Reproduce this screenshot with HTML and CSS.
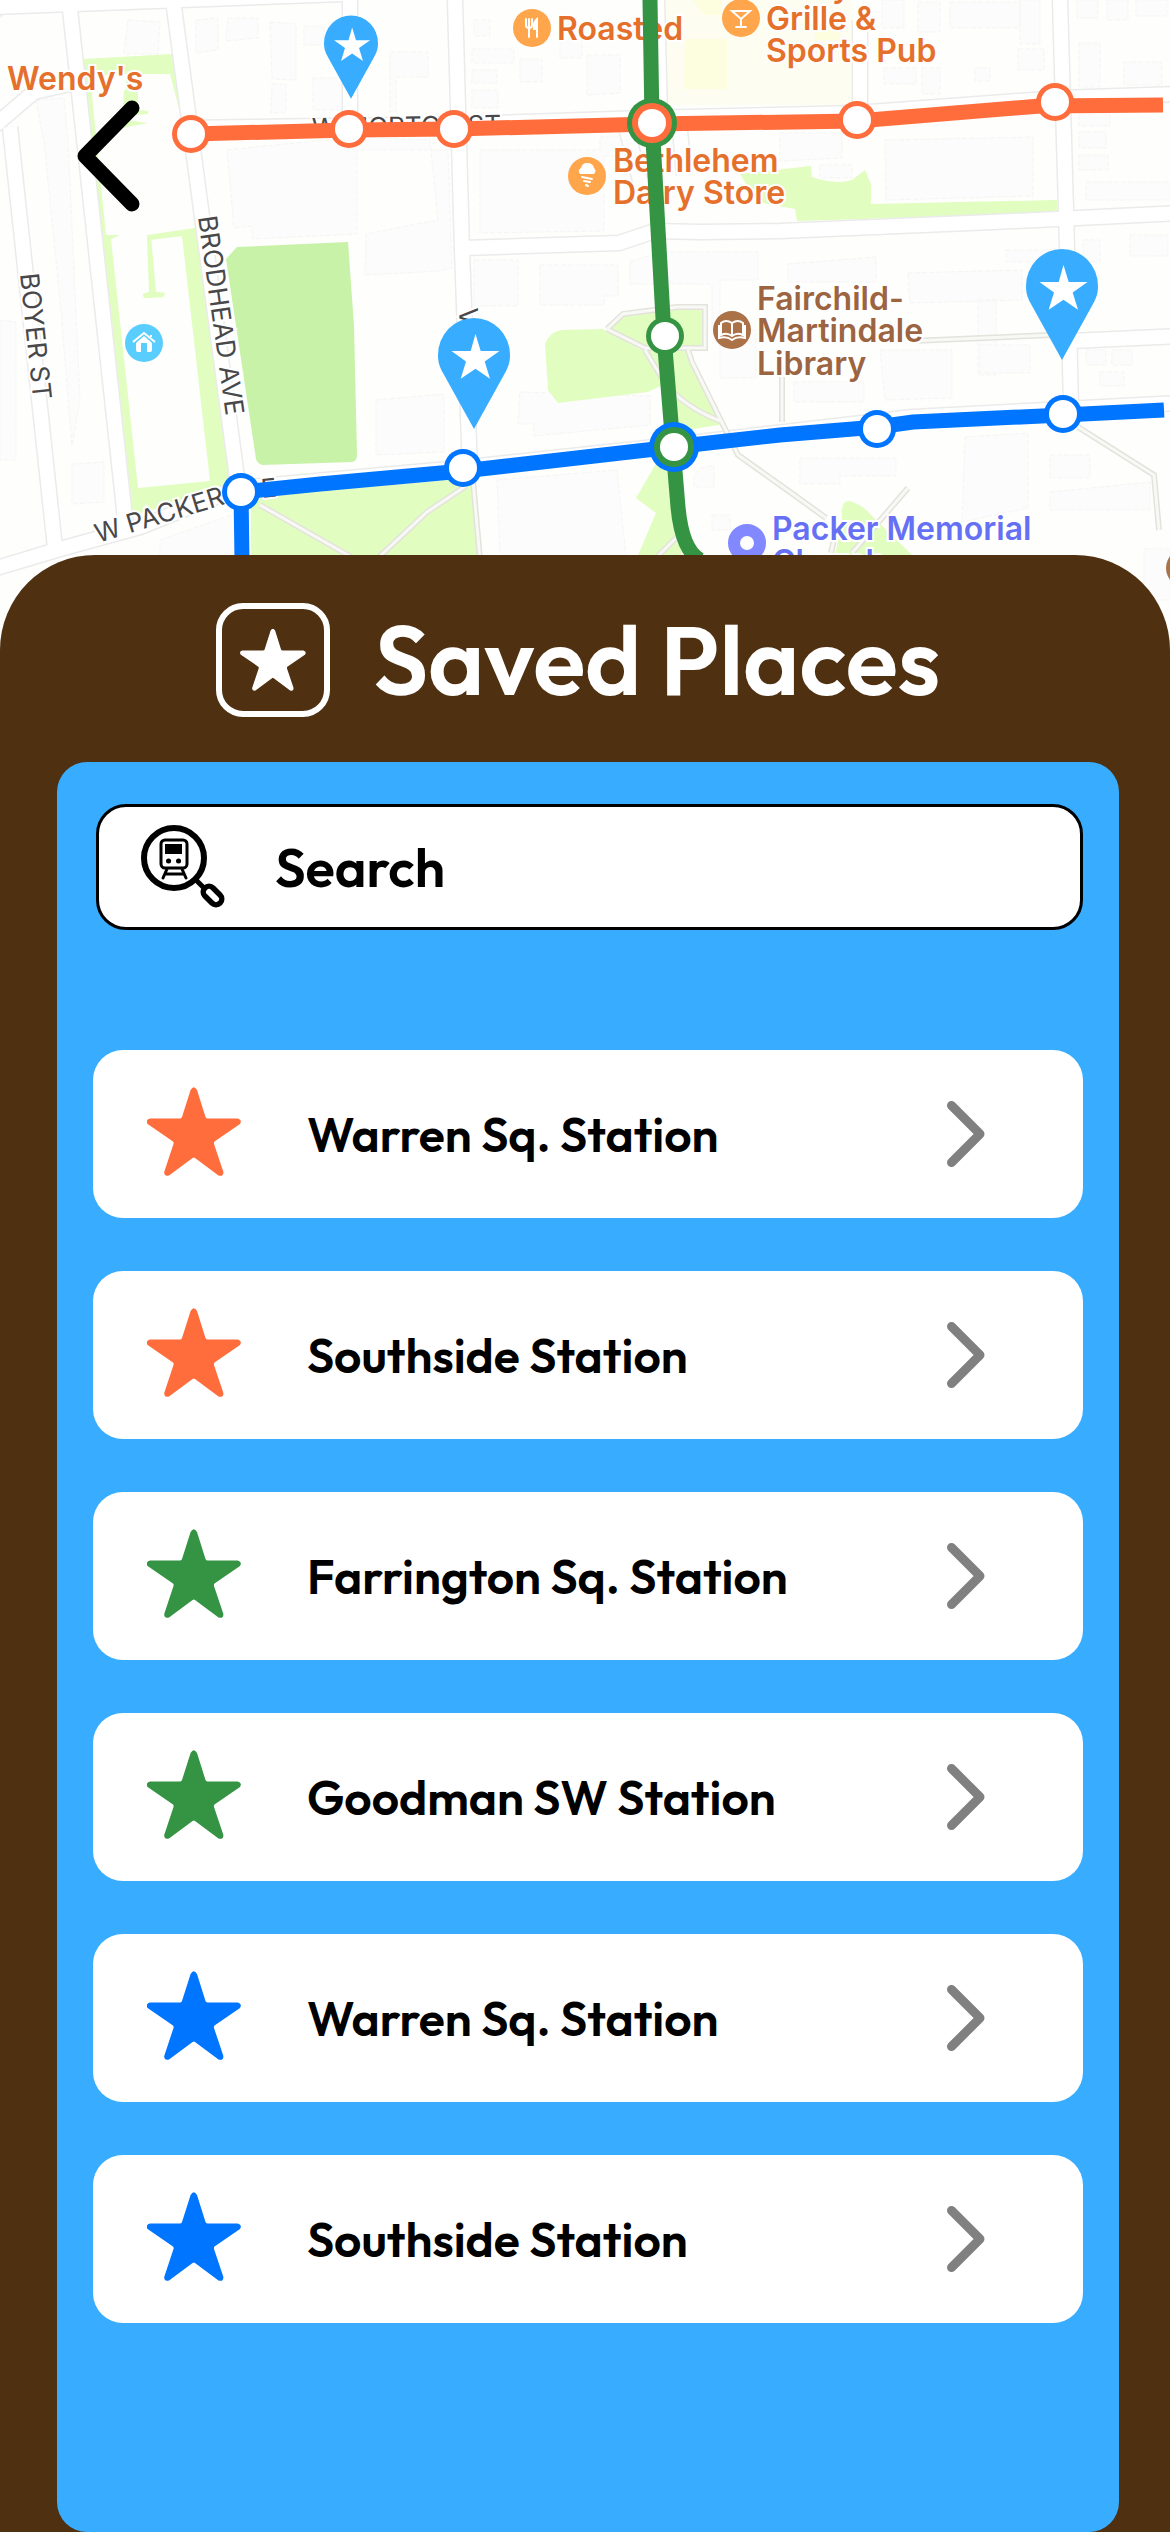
FILE: index.html
```html
<!DOCTYPE html>
<html lang="en">
<head>
<meta charset="utf-8">
<meta name="viewport" content="width=device-width, initial-scale=1">
<title>Saved Places</title>
<link rel="stylesheet" href="styles.css">
</head>
<body>
<svg class="defs" width="0" height="0" aria-hidden="true">
  <symbol id="star" viewBox="0 0 94 90">
    <path d="M43.600 3Q46.800-2.500 50 3L58.500 30Q59 31.500 61 31.500H90.500Q95.500 33 93 37L67.500 54.500Q66.700 55.500 67 57L76.400 85Q76.500 90 71.500 88.500L48 71Q46.800 70 45.600 71L22 88.500Q17 90 17.200 85L26.500 57Q27 55.500 26 54.500L.600 37Q-2 33 3 31.500H32.600Q34.600 31.500 35 30Z"/>
  </symbol>
  <symbol id="chevron" viewBox="0 0 38 66">
    <path d="M4.500 4.500L33 33L4.500 61.500" fill="none" stroke="currentColor" stroke-width="9" stroke-linecap="round" stroke-linejoin="round"/>
  </symbol>
  <symbol id="pin" viewBox="0 0 72 111">
    <path d="M36 111L5 55C1 48 0 43 0 37A36 37 0 0 1 72 37C72 43 71 48 67 55Z" fill="#38adff"/>
    <path d="M37.500 16L42.700 33H61.500L46.700 43.600L52 60.700L37.500 50.700L22.700 60.700L28 43.600L13.500 33H32.700Z" fill="#fff"/>
  </symbol>
</svg>

<header class="map">
  <svg class="map-art" viewBox="0 0 1170 650" role="img" aria-label="Transit map">
    <rect width="1170" height="650" fill="#fefefc"/>
    <path d="M0 0H22L0 18Z" fill="#f1f1f6"/>
    <!-- buildings -->
    <g fill="#fcfcfd" stroke="#f5f5f3" stroke-dasharray="5 2">
      <path d="M128 20L160 22L158 54L124 54ZM196 20L218 18V50L196 53ZM228 18H258V38L226 41ZM270 22L296 24V80L272 79ZM304 26H324V45H304ZM313 78H346V110H313ZM272 84H286V112L271 113Z"/>
      <path d="M36 100L64 98L68 140L80 400L72 446L60 300L44 142Z"/>
      <path d="M141 145L170 142V163L140 165ZM130 172L172 170L176 201L130 207ZM152 212L184 210V228L152 230Z"/>
      <path d="M227 150L354 137L430 140L438 220L366 234L365 275L440 271L452 268L448 150L357 150V234L252 239V226L234 228Z"/>
      <path d="M72 464L104 462V502L72 504ZM0 320L16 322V460H0ZM376 400L444 394V452L376 455ZM160 540L240 512V556H160Z"/>
      <path d="M474 20H490V36H474ZM472 49H514V63H472ZM472 70H497V83H472ZM520 59H542V82H520ZM587 55H620V93L587 95ZM560 24H582V58H560ZM472 90H498V108H472ZM390 52H428V77H396V112H390Z"/>
      <path d="M480 150H600V137H630V156H604V231L480 233ZM470 240"/>
      <path d="M474 260H518V306H474ZM540 265H618V296H604V305H540ZM630 262L660 252H758V280H720V378H756V330H712V284H630Z"/>
      <path d="M520 392L650 396V425L534 436V424H518Z"/>
      <path d="M497 480L617 470L626 556H500ZM700 468L714 465V487H694V476ZM712 515H730V530H712Z"/>
      <path d="M885 140L1033 137V196L886 200ZM780 133H842V158L780 161ZM820 165H852V178H820Z"/>
      <path d="M788 264L876 257V282H788ZM908 273L1022 270V300L910 303ZM978 300H996V375H978ZM1006 250H1054V262H1006Z"/>
      <path d="M880 350H952V398L885 400ZM980 345H1030V373H980ZM794 382H864V402H794Z"/>
      <path d="M800 458H896V476H840V484H800ZM965 437L1028 433V508L962 522ZM1050 455H1090V478H1050ZM1050 492L1150 482V510H1050Z"/>
      <path d="M882 0V28H904V0ZM918 2H940V32H918ZM950 2H1020V28H950ZM1020 0V44H1040V0ZM884 68H916V84H884ZM922 68H940V94H922ZM975 68H990V81H975ZM1018 49H1044V70H1018Z"/>
      <path d="M1077 0V18H1098V0ZM1107 0V20H1128V0ZM1136 0V16H1168V0ZM1079 43H1100V87H1079ZM1124 62H1162V85H1124ZM1079 110H1110V126H1079ZM1079 132H1106V148H1079ZM1079 155H1108V170H1079ZM1086 182H1170V200H1086ZM1083 240H1100V262H1083ZM1130 235H1168V256H1130ZM1086 350H1106V365H1086ZM1112 350H1132V365H1112ZM1100 372H1124V386H1100ZM1144 549H1170V600H1144Z"/>
    </g>
    <!-- parks and lawns -->
    <path d="M663 0H852V105H667Z" fill="#fefdf1"/>
    <path d="M685 39H727V89H684ZM692 0L704 15H722V0ZM815 30H840V40H815Z" fill="#fdfde0"/>
    <g fill="#e1fdc0">
      <path d="M83 59L173 54L182 113L230 477L225 490L133 515Z"/>
      <path d="M251 497L472 478L482 560H251Z"/>
      <path d="M545 344Q550 331 563 330L603 329L645 352L663 385L648 392L558 403L548 390Z"/>
      <path d="M607 329L623 314L677 307H704V348L688 350L692 366L725 424L680 431L663 385L645 350Z"/>
      <path d="M657 462L636 498L656 513L636 560H682L673 462Z"/>
      <path d="M842 518Q840 500 850 501Q864 506 870 514L913 556H835Z"/>
      <path d="M740 174L811 166L812 177Q835 185 852 180L865 170L871 184V204L1057 200V213L797 221L795 209L757 202Z"/>
    </g>
    <path d="M90 76L126 74V120L148 123L122 128L124 90H138V74L170 74L182 120L195 228L147 235L154 292L165 293L163 297L144 298L143 294L149 292L150 240L182 236L210 481L138 488L111 239L120 235L147 235L106 235Z" fill="#fefefc" fill-rule="evenodd"/>
    <path d="M127 78H138V110L148 111V114L124 116Z" fill="#e1fdc0"/>
    <path d="M147 237L151 236L156 292L165 293L163 297L144 298L143 294L149 292Z" fill="#e1fdc0"/>
    <path d="M226 259L237 247L348 242L354 326L357 455Q357 461 352 462L262 465Q257 463 256 459Z" fill="#c7f2a8"/>
    <!-- streets: casing, then surface -->
    <g fill="none" stroke="#ebebeb" stroke-width="17" stroke-linejoin="round">
      <path d="M-8 128L34 92L70 84M10 127L55 548M69 0L126 528M173 0L238 485M350 0V120"/>
      <path d="M-10 7L343 -6M455 0L462 250L470 470M464 248L619 243L655 231L700 232L780 231L993 222L1180 213"/>
      <path d="M185 128L465 124L645 118L856 113L1060 98L1180 94M657 0L660 115M860 20V110M1060 0L1066 210L1071 405M1071 341L1180 336"/>
      <path d="M-10 570L60 549L140 527L238 488L460 468L673 445L913 417L1180 403M624 120L640 180M680 130L684 175"/>
    </g>
    <g fill="none" stroke="#fff" stroke-width="14" stroke-linejoin="round">
      <path d="M-8 128L34 92L70 84M10 127L55 548M69 0L126 528M173 0L238 485M350 0V120"/>
      <path d="M-10 7L343 -6M455 0L462 250L470 470M464 248L619 243L655 231L700 232L780 231L993 222L1180 213"/>
      <path d="M185 128L465 124L645 118L856 113L1060 98L1180 94M657 0L660 115M860 20V110M1060 0L1066 210L1071 405M1071 341L1180 336"/>
      <path d="M-10 570L60 549L140 527L238 488L460 468L673 445L913 417L1180 403M624 120L640 180M680 130L684 175"/>
    </g>
    <!-- footpaths -->
    <g fill="none" stroke="#e3e3dc" stroke-width="6">
      <path d="M260 505L353 558M378 558L427 512L466 486M473 480L480 560M607 329L623 314L677 307H705V348H645L607 329M645 350L665 383Q685 408 723 422M688 350L692 362L738 455L790 492L826 518M657 557L680 534M831 553L836 530M852 553L908 488M912 341L1050 335M782 365V422M1078 427L1154 475L1159 530"/>
    </g>
    <g fill="none" stroke="#f8f8f5" stroke-width="3">
      <path d="M260 505L353 558M378 558L427 512L466 486M473 480L480 560M607 329L623 314L677 307H705V348H645L607 329M645 350L665 383Q685 408 723 422M688 350L692 362L738 455L790 492L826 518M657 557L680 534M831 553L836 530M852 553L908 488M912 341L1050 335M782 365V422M1078 427L1154 475L1159 530"/>
    </g>
    <!-- street names -->
    <g class="street">
      <text transform="translate(20 274) rotate(84)">BOYER ST</text>
      <text transform="translate(198 217) rotate(82)">BRODHEAD AVE</text>
      <text transform="translate(98 543) rotate(-17)">W PACKER</text>
      <text transform="translate(262 498) rotate(-6)">E</text>
      <text transform="translate(312 137) rotate(-1)">W MORTON ST</text>
      <text transform="translate(459 308) rotate(88)">V</text>
    </g>
    <!-- points of interest -->
    <g class="poi poi-food">
      <text x="7" y="90">Wendy's</text>
      <text x="557" y="40">Roasted</text>
      <text x="613" y="172">Bethlehem</text>
      <text x="613" y="204">Dairy Store</text>
      <text x="832" y="-3">y</text>
      <text x="766" y="30">Grille &amp;</text>
      <text x="766" y="62">Sports Pub</text>
    </g>
    <g class="poi poi-library">
      <text x="757" y="310">Fairchild-</text>
      <text x="757" y="342">Martindale</text>
      <text x="757" y="375">Library</text>
    </g>
    <g class="poi poi-church">
      <text x="772" y="540">Packer Memorial</text>
      <text x="772" y="573">Church</text>
    </g>
    <g fill="#ffa54b"><circle cx="532" cy="28" r="19"/><circle cx="587" cy="176" r="19"/><circle cx="741" cy="18" r="19"/></g>
    <g fill="none" stroke="#fff" stroke-width="2" stroke-linecap="round">
      <path d="M526 19V25Q526 28 529 28Q532 28 532 25V19M529 19V37" /><path d="M537 37V19Q533 22 534 29H537" fill="#fff"/>
      <path d="M732 11H750L741 19ZM741 19V26M736 27H746"/>
    </g>
    <path d="M580 174Q577 170 581 168Q582 163 587 163Q593 163 594 168Q597 171 594 174Z" fill="#fff"/>
    <path d="M582 177L592 179M584 181L590 182M586 185L588 186" stroke="#fff" stroke-width="2" stroke-linecap="round"/>
    <circle cx="732" cy="330" r="19" fill="#ab7147"/><circle cx="1185" cy="568" r="19" fill="#ab7147"/>
    <path d="M732 323Q726 319 721 323V335Q727 332 732 336Q737 332 743 335V323Q738 319 732 323ZM732 323V336M719 325V338Q727 336 732 340Q737 336 745 338V325" fill="none" stroke="#fff" stroke-width="2"/>
    <circle cx="747" cy="543" r="13" fill="#fff" stroke="#8288ff" stroke-width="12"/>
    <circle cx="144" cy="343" r="19" fill="#59cefe"/>
    <path d="M133 342L144 333L155 342M151 335V337" fill="none" stroke="#fff" stroke-width="2"/>
    <path d="M136 343L144 336L152 343V350Q152 352 150 352H147V343H141V352H138Q136 352 136 350Z" fill="#fff"/>
    <path d="M141 343H147V350H141Z" fill="#59cefe"/>
    <!-- transit lines -->
    <g fill="none" stroke-width="15">
      <path d="M191 134L349 130L454 129L652 124L857 121L1040 106L1163 105" stroke="#ff6d3d"/>
      <path d="M242 560L241 492L320 484L463 471L673 447L780 435L877 427L913 422L1063 415L1164 410" stroke="#0075ff"/>
      <path d="M650 0L652 122L664 336L673 447L678 507Q682 550 700 560" stroke="#359444"/>
    </g>
    <g fill="#ff6d3d"><circle cx="191" cy="134" r="19"/><circle cx="349" cy="129" r="19"/><circle cx="454" cy="129" r="19"/><circle cx="857" cy="120" r="19"/><circle cx="1055" cy="102" r="19"/></g>
    <g fill="#0075ff"><circle cx="241" cy="492" r="19"/><circle cx="463" cy="468" r="19"/><circle cx="877" cy="429" r="19"/><circle cx="1063" cy="414" r="19"/><circle cx="674" cy="447" r="25"/></g>
    <g fill="#359444"><circle cx="652" cy="123" r="25"/><circle cx="665" cy="336" r="19"/><circle cx="674" cy="447" r="20"/></g>
    <circle cx="652" cy="123" r="20" fill="#ff6d3d"/>
    <g fill="#fff">
      <circle cx="191" cy="134" r="14"/><circle cx="349" cy="129" r="14"/><circle cx="454" cy="129" r="14"/><circle cx="652" cy="123" r="14"/><circle cx="857" cy="120" r="14"/><circle cx="1055" cy="102" r="14"/>
      <circle cx="241" cy="492" r="14"/><circle cx="463" cy="468" r="14"/><circle cx="674" cy="447" r="14"/><circle cx="877" cy="429" r="14"/><circle cx="1063" cy="414" r="14"/><circle cx="665" cy="336" r="14"/>
    </g>
    <use href="#pin" x="324" y="15" width="54" height="84"/>
    <use href="#pin" x="438" y="318" width="72" height="111"/>
    <use href="#pin" x="1026" y="249" width="72" height="111"/>
  </svg>
  <button class="back" type="button" aria-label="Back">
    <svg viewBox="0 0 64 112"><path d="M56 8L9 56L56 104" fill="none" stroke="#000" stroke-width="15" stroke-linecap="round" stroke-linejoin="round"/></svg>
  </button>
</header>

<main class="sheet">
  <div class="title">
    <span class="title-badge"><svg><use href="#star"/></svg></span>
    <h1>Saved Places</h1>
  </div>

  <section class="panel">
    <label class="search">
      <svg class="search-icon" viewBox="0 0 84 84" fill="none" stroke="#000" aria-hidden="true">
        <circle cx="33" cy="33" r="30" stroke-width="6"/>
        <rect x="20" y="15" width="26" height="28" rx="4" stroke-width="3"/>
        <rect x="24" y="19" width="17" height="10" fill="#000" stroke="none"/>
        <path d="M27.500 36h.1M37.500 36h.1" stroke-width="5" stroke-linecap="round"/>
        <path d="M26 44L22 53M41 44L45 53M25 49H42" stroke-width="3" stroke-linecap="round"/>
        <path d="M54 54L64 64" stroke-width="5"/>
        <path d="M68 67L75 74" stroke-width="17" stroke-linecap="round"/>
        <path d="M68 67L75 74" stroke="#fff" stroke-width="6" stroke-linecap="round"/>
      </svg>
      <input type="search" placeholder="Search" aria-label="Search">
    </label>

    <ul class="places">
      <li><a class="place" href="#"><svg class="place-star orange"><use href="#star"/></svg><span class="place-name">Warren Sq. Station</span><svg class="place-go"><use href="#chevron"/></svg></a></li>
      <li><a class="place" href="#"><svg class="place-star orange"><use href="#star"/></svg><span class="place-name">Southside Station</span><svg class="place-go"><use href="#chevron"/></svg></a></li>
      <li><a class="place" href="#"><svg class="place-star green"><use href="#star"/></svg><span class="place-name">Farrington Sq. Station</span><svg class="place-go"><use href="#chevron"/></svg></a></li>
      <li><a class="place" href="#"><svg class="place-star green"><use href="#star"/></svg><span class="place-name">Goodman SW Station</span><svg class="place-go"><use href="#chevron"/></svg></a></li>
      <li><a class="place" href="#"><svg class="place-star blue"><use href="#star"/></svg><span class="place-name">Warren Sq. Station</span><svg class="place-go"><use href="#chevron"/></svg></a></li>
      <li><a class="place" href="#"><svg class="place-star blue"><use href="#star"/></svg><span class="place-name">Southside Station</span><svg class="place-go"><use href="#chevron"/></svg></a></li>
    </ul>
  </section>
</main>
</body>
</html>
```
FILE: styles.css
```css
* { box-sizing: border-box; }

body {
  margin: 0;
  min-height: 100vh;
  display: flex;
  flex-direction: column;
  background: #fefefc;
  font-family: Outfit, Lato, sans-serif;
  color: #000;
}

.defs { position: absolute; }

/* Map */
.map { position: relative; }
.map-art { display: block; width: 100%; height: auto; }

.street {
  font: 400 26px Inter, sans-serif;
  fill: #48484a;
  stroke: #fff;
  stroke-width: 4px;
  paint-order: stroke;
}

.poi {
  font: 600 32px Inter, sans-serif;
  stroke: #fff;
  stroke-width: 4px;
  paint-order: stroke;
}
.poi-food { fill: #e5702c; }
.poi-library { fill: #9c6440; }
.poi-church { fill: #6670f4; }

.back {
  position: absolute;
  top: 100px;
  left: 76px;
  width: 64px;
  height: 112px;
  padding: 0;
  border: 0;
  background: none;
}
.back svg { display: block; width: 100%; height: 100%; }

/* Sheet */
.sheet {
  position: relative;
  flex: 1;
  display: flex;
  flex-direction: column;
  margin-top: -95px;
  padding: 48px 51px 0 57px;
  border-radius: 95px 95px 0 0;
  background: #4f3011;
}

.title {
  display: flex;
  align-items: center;
  justify-content: center;
  gap: 44px;
  margin-bottom: 45px;
  padding-right: 20px;
  color: #fff;
}
.title h1 {
  margin: 0;
  font-size: 96px;
  font-weight: 600;
  line-height: 114px;
}
.title-badge {
  display: flex;
  align-items: center;
  justify-content: center;
  width: 114px;
  height: 114px;
  border: 6px solid #fff;
  border-radius: 27px;
}
.title-badge svg {
  width: 94px;
  height: 90px;
  fill: #fff;
  transform: scale(.7);
}

.panel {
  flex: 1;
  padding: 42px 36px 60px;
  border-radius: 30px;
  background: #38adff;
}

.search {
  display: flex;
  align-items: center;
  gap: 50px;
  height: 126px;
  margin: 0 0 120px 3px;
  padding: 0 42px;
  border: 3px solid #000;
  border-radius: 30px;
  background: #fff;
}
.search-icon { flex: none; width: 84px; height: 84px; }
.search input {
  flex: 1;
  min-width: 0;
  padding: 0;
  border: 0;
  outline: 0;
  background: none;
  font: 600 54px/64px Outfit, Lato, sans-serif;
  color: #000;
}
.search input::placeholder { color: #000; opacity: 1; }

.places {
  display: flex;
  flex-direction: column;
  gap: 53px;
  margin: 0;
  padding: 0;
  list-style: none;
}
.place {
  display: flex;
  align-items: center;
  height: 168px;
  padding: 0 98px 0 54px;
  border-radius: 30px;
  background: #fff;
  color: #000;
  text-decoration: none;
}
.place-star { flex: none; width: 94px; height: 90px; margin-bottom: 4px; }
.place-name {
  flex: 1;
  padding-left: 66px;
  font-size: 48px;
  font-weight: 600;
  line-height: 60px;
}
.place-go { flex: none; width: 38px; height: 66px; color: #808080; }

.orange { fill: #ff6d3d; }
.green { fill: #359444; }
.blue { fill: #0075ff; }
```
